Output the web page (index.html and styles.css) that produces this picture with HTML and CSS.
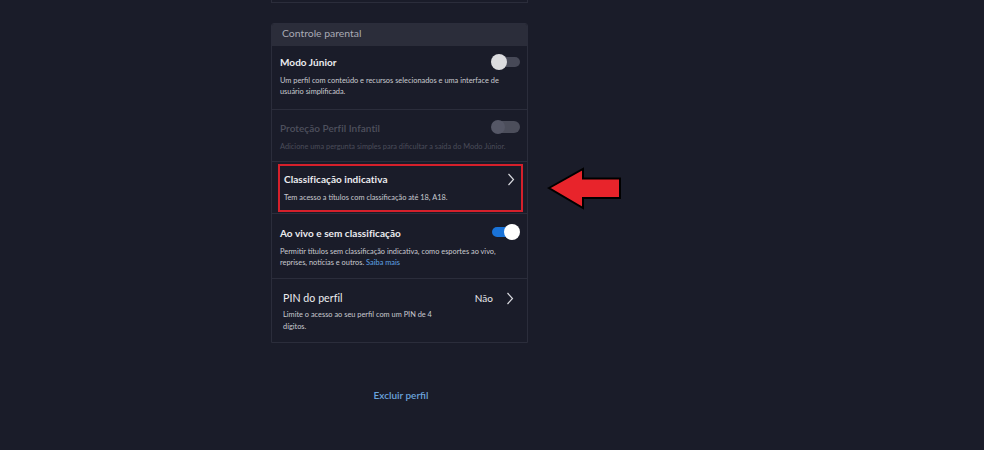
FILE: index.html
```html
<!DOCTYPE html>
<html lang="pt">
<head>
<meta charset="utf-8">
<title>Controle parental</title>
<link rel="stylesheet" href="styles.css">
</head>
<body>
<div class="layout">
  <div class="col">
    <div class="top-card"></div>
    <section class="panel">
      <div class="panel-header">Controle parental</div>
      <div class="row row-junior">
        <div class="row-head">
          <span class="title">Modo Júnior</span>
          <span class="toggle off"><span class="knob"></span></span>
        </div>
        <p class="desc">Um perfil com conteúdo e recursos selecionados e uma interface de usuário simplificada.</p>
      </div>
      <div class="row row-protect disabled">
        <div class="row-head">
          <span class="title">Proteção Perfil Infantil</span>
          <span class="toggle dis"><span class="knob"></span></span>
        </div>
        <p class="desc">Adicione uma pergunta simples para dificultar a saída do Modo Júnior.</p>
      </div>
      <div class="row row-rating">
        <div class="highlight">
          <div class="row-head">
            <span class="title">Classificação indicativa</span>
            <svg class="chev" width="8" height="13" viewBox="0 0 8 13"><path d="M1.5 1 L6.5 6.5 L1.5 12" fill="none" stroke="#d8d9de" stroke-width="1.2"/></svg>
          </div>
          <p class="desc">Tem acesso a títulos com classificação até 18, A18.</p>
        </div>
      </div>
      <div class="row row-live">
        <div class="row-head">
          <span class="title">Ao vivo e sem classificação</span>
          <span class="toggle on"><span class="knob"></span></span>
        </div>
        <p class="desc">Permitir títulos sem classificação indicativa, como esportes ao vivo,<br>reprises, notícias e outros. <a class="link" href="#">Saiba mais</a></p>
      </div>
      <div class="row row-pin">
        <div class="row-head">
          <span class="title pin-title">PIN do perfil</span>
          <span class="pin-right"><span class="pin-val">Não</span><svg class="chev" width="8" height="13" viewBox="0 0 8 13"><path d="M1.5 1 L6.5 6.5 L1.5 12" fill="none" stroke="#d8d9de" stroke-width="1.2"/></svg></span>
        </div>
        <p class="desc pin-desc">Limite o acesso ao seu perfil com um PIN de 4 dígitos.</p>
      </div>
    </section>
    <div class="delete"><a class="link delete-link" href="#">Excluir perfil</a></div>
  </div>
</div>
<svg class="arrow" width="80" height="50" viewBox="545 165 80 50">
  <polygon points="549,188 583,169 583,178.5 620,178.5 620,198 583,198 583,208" fill="#e8242b" stroke="#000" stroke-width="2" stroke-linejoin="miter"/>
</svg>
</body>
</html>
```

FILE: styles.css
```css
* { box-sizing: border-box; }
html, body {
  margin: 0;
  padding: 0;
  background: #1a1c29;
  height: 100%;
}
body {
  font-family: Lato, "Noto Sans", "DejaVu Sans", sans-serif;
  color: #f2f2f4;
  position: relative;
  overflow: hidden;
}
.layout {
  display: flex;
  padding-left: 271px;
}
.col {
  width: 257px;
}
.top-card {
  height: 3px;
  border: 1px solid #2b2d3b;
  border-top: none;
}
.panel {
  margin-top: 20px;
  border: 1px solid #2b2d3b;
  border-radius: 3px 3px 0 0;
}
.panel-header {
  height: 22px;
  line-height: 19px;
  padding-left: 10px;
  background: #2b2d3a;
  color: #a9abb5;
  font-size: 10.4px;
  border-radius: 2px 2px 0 0;
}
.row {
  border-bottom: 1px solid #2b2d3b;
  padding: 10px 7px 11px 8px;
}
.row:last-child { border-bottom: none; }
.row-head {
  display: flex;
  align-items: center;
  justify-content: space-between;
  height: 14px;
}
.title {
  font-size: 10px;
  font-weight: 700;
  color: #ececef;
  letter-spacing: 0.05px;
}
.desc {
  margin: 5px 0 0;
  font-size: 7.4px;
  line-height: 11px;
  color: #c9cad0;
}
.toggle {
  position: relative;
  width: 29px;
  height: 16px;
  display: inline-block;
}
.toggle::before {
  content: "";
  position: absolute;
  left: 1px;
  right: 0;
  top: 3px;
  height: 10px;
  border-radius: 5px;
  background: #474957;
}
.toggle .knob {
  position: absolute;
  top: 0;
  width: 16px;
  height: 16px;
  border-radius: 50%;
  background: #dcdcdf;
}
.toggle.off .knob { left: 0; }
.toggle.dis::before { background: #4c4e5b; top: 2px; height: 12px; border-radius: 6px; }
.toggle.dis .knob { left: 0; top: 1px; width: 14px; height: 14px; background: #555766; }
.toggle.on::before { background: #1a73d8; right: 8px; }
.toggle.on .knob { right: 0; background: #ffffff; }

.row-junior { padding-top: 9px; padding-bottom: 12px; }
.row-junior .desc { margin-top: 6px; }
.row-junior .toggle { margin-top: -1px; }
.row-protect { padding-top: 11px; padding-bottom: 9px; }
.row-protect .desc { margin-top: 6px; }
.disabled .title { color: #4e505d; font-weight: 600; }
.disabled .desc { color: #4a4c59; }
.row-protect .toggle { margin-top: -2px; }

.row-rating { padding: 2px 4px 1px 6px; }
.highlight {
  border: 2px solid #d5202b;
  padding: 6px 6px 7px 4px;
}
.highlight .desc { margin-top: 6px; }
.chev { display: block; }
.row-live { padding-top: 12px; padding-bottom: 10px; }
.row-live .desc { margin-top: 6px; }
.row-live .toggle { margin-top: -2px; }
.link { color: #5fa3e6; text-decoration: none; }

.row-pin { padding: 12px 13px 9px 11px; }
.pin-title { font-weight: 400; font-size: 10.6px; }
.pin-right { display: flex; align-items: center; gap: 13px; }
.pin-val { font-size: 10px; color: #e8e8ec; }
.pin-desc { margin-top: 4px; line-height: 12px; max-width: 165px; }

.delete {
  margin-top: 40px;
  padding-left: 3px;
  text-align: center;
}
.delete-link {
  font-size: 10px;
  color: #6aa3dc;
  font-weight: 600;
}
.arrow {
  position: absolute;
  left: 545px;
  top: 165px;
}
```
